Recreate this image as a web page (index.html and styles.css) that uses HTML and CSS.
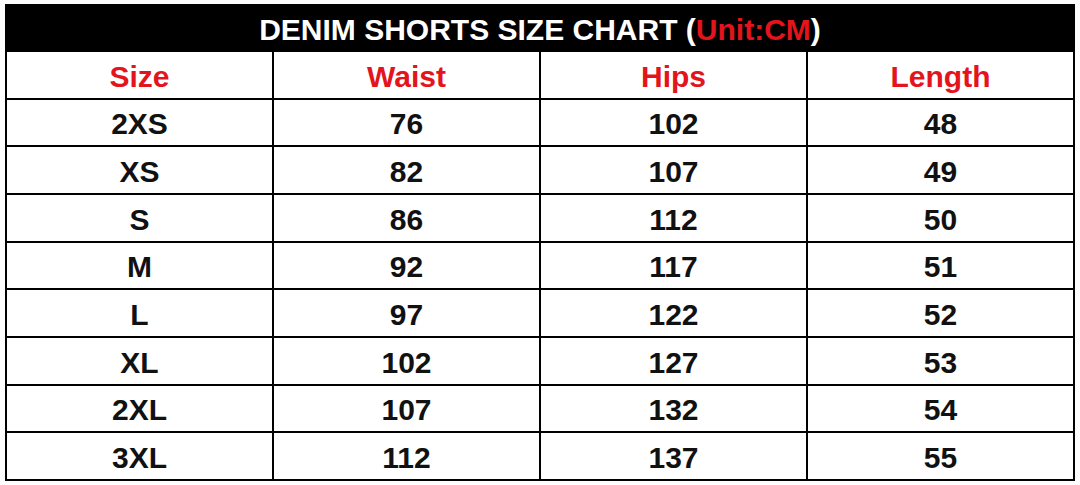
FILE: index.html
```html
<!DOCTYPE html>
<html>
<head>
<meta charset="utf-8">
<link rel="stylesheet" href="styles.css">
</head>
<body>
<div class="chart">
  <div class="title">DENIM SHORTS SIZE CHART (<span class="red">Unit:CM</span>)</div>
  <div class="grid">
    <div class="cell head">Size</div><div class="cell head">Waist</div><div class="cell head">Hips</div><div class="cell head">Length</div>
    <div class="cell">2XS</div><div class="cell">76</div><div class="cell">102</div><div class="cell">48</div>
    <div class="cell">XS</div><div class="cell">82</div><div class="cell">107</div><div class="cell">49</div>
    <div class="cell">S</div><div class="cell">86</div><div class="cell">112</div><div class="cell">50</div>
    <div class="cell">M</div><div class="cell">92</div><div class="cell">117</div><div class="cell">51</div>
    <div class="cell">L</div><div class="cell">97</div><div class="cell">122</div><div class="cell">52</div>
    <div class="cell">XL</div><div class="cell">102</div><div class="cell">127</div><div class="cell">53</div>
    <div class="cell">2XL</div><div class="cell">107</div><div class="cell">132</div><div class="cell">54</div>
    <div class="cell">3XL</div><div class="cell">112</div><div class="cell">137</div><div class="cell">55</div>
  </div>
</div>
</body>
</html>
```
FILE: styles.css
```css
html, body {
  margin: 0;
  padding: 0;
  background: #fdfdfd;
}
body {
  font-family: "Liberation Sans", Arial, sans-serif;
  font-weight: bold;
  padding: 4px 5px;
}
.chart {
  width: 1070px;
  height: 477px;
  box-sizing: border-box;
  border: 2px solid #000;
  display: flex;
  flex-direction: column;
  background: #000;
}
.title {
  height: 46px;
  flex: none;
  color: #fff;
  font-size: 30px;
  display: flex;
  align-items: center;
  justify-content: center;
  padding-top: 2px;
  box-sizing: border-box;
}
.red { color: #e3141b; }
.grid {
  flex: 1;
  display: grid;
  grid-template-columns: repeat(4, 1fr);
  grid-template-rows: repeat(9, 1fr);
  gap: 2px;
  background: #000;
}
.cell {
  background: #fff;
  color: #111;
  font-size: 30px;
  padding-top: 4px;
  display: flex;
  align-items: center;
  justify-content: center;
}
.cell.head { color: #e3141b; }
```
